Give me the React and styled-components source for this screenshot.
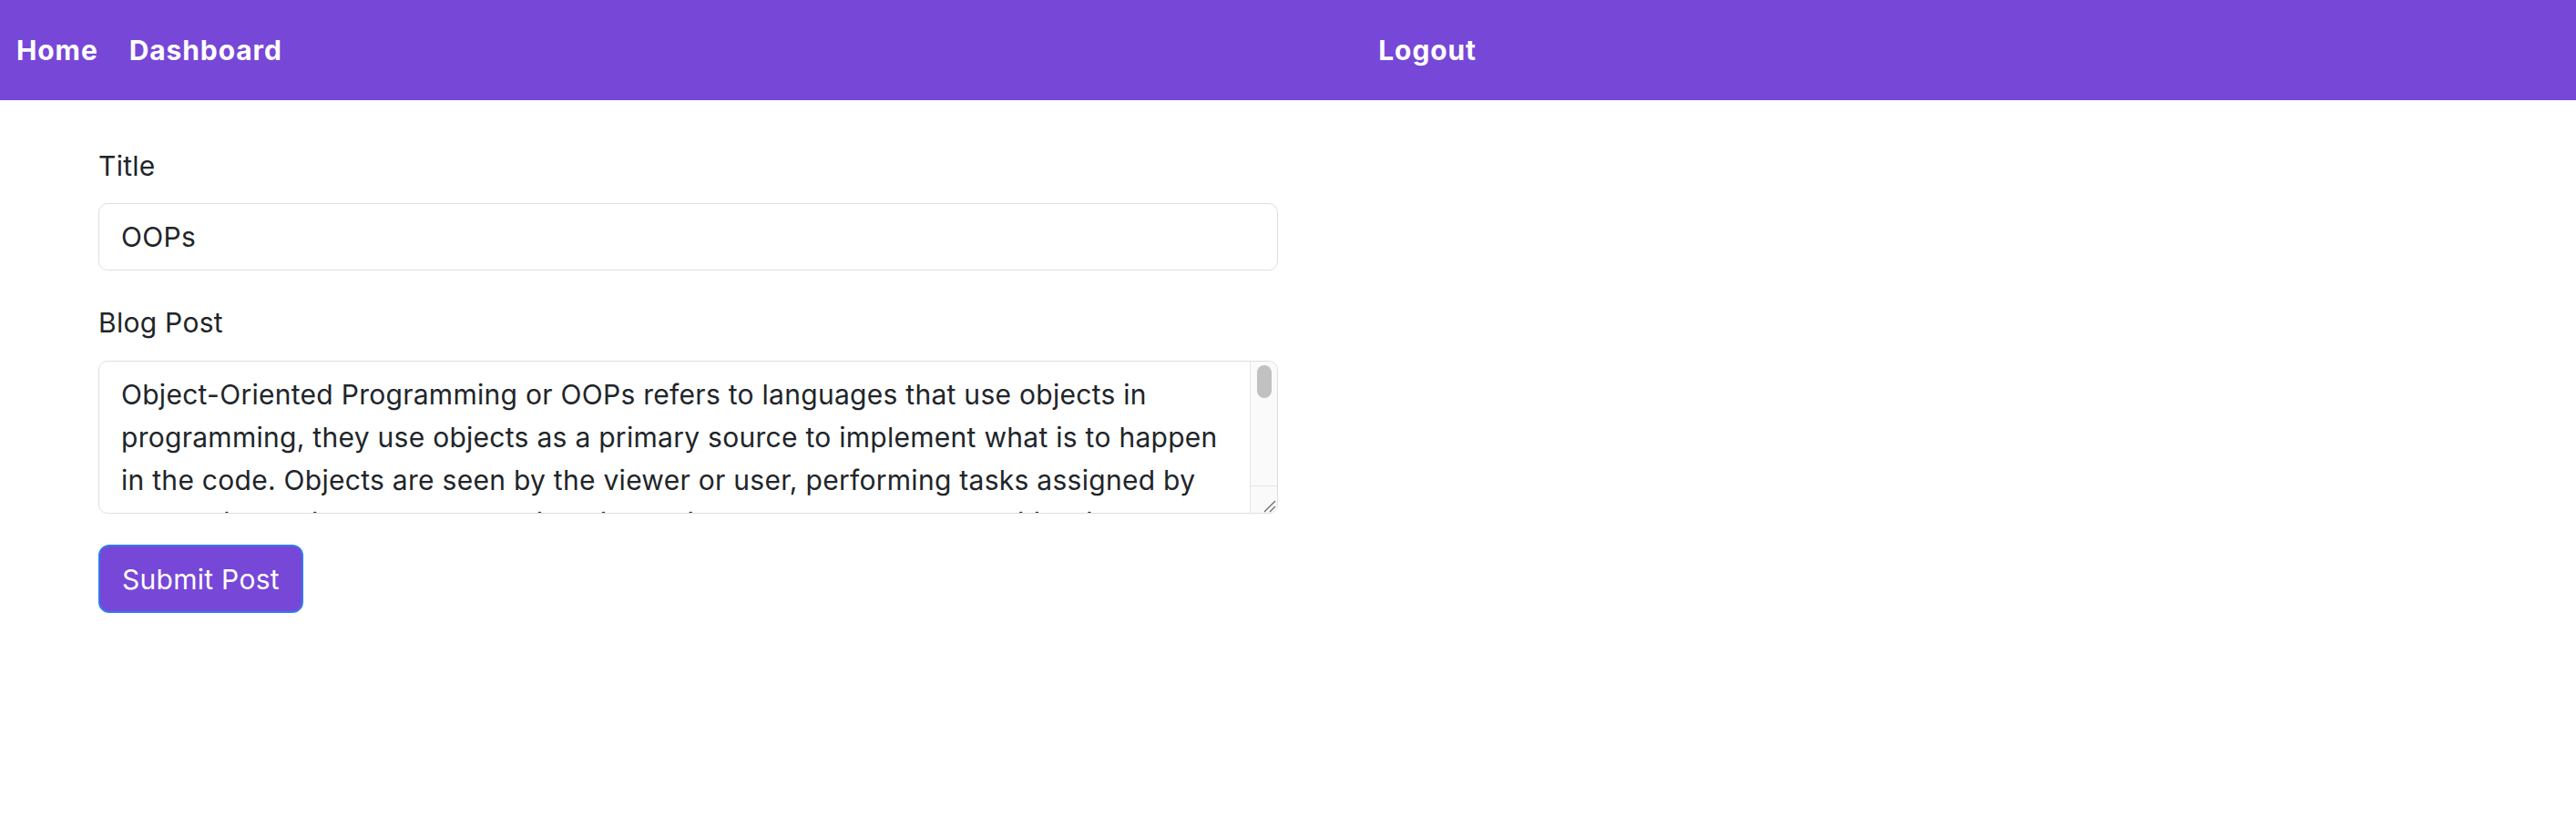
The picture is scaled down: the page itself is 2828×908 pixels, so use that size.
import React, { useState } from "react";
import styled, { createGlobalStyle } from "styled-components";

const GlobalStyle = createGlobalStyle`
  html, body {
    margin: 0;
    padding: 0;
    background: #fff;
  }

  body {
    font-family: Inter, "Noto Sans", "Liberation Sans", sans-serif;
    color: #212529;
  }

  * {
    box-sizing: border-box;
  }
`;

const Navbar = styled.nav`
  height: 110px;
  background-color: #7747d7;
  display: flex;
  align-items: center;
  padding: 0 18px;

  & .navbar__links {
    display: flex;
    align-items: center;
    gap: 34px;
    width: 1603px;
  }

  & .navbar__links--end {
    margin-left: auto;
  }
`;

const NavLink = styled.a`
  color: #fff;
  font-size: 30px;
  font-weight: 700;
  letter-spacing: 0.9px;
  text-decoration: none;
  cursor: pointer;
`;

const Main = styled.main`
  padding: 49px 108px;
`;

const Form = styled.form`
  width: 1295px;
  display: flex;
  flex-direction: column;
`;

const Field = styled.div`
  display: flex;
  flex-direction: column;
  margin-bottom: ${({ $gap }) => $gap || 34}px;
`;

const Label = styled.label`
  font-size: 30px;
  line-height: 46px;
  letter-spacing: 0.28px;
  margin-bottom: ${({ $gap }) => $gap || 18}px;
`;

const controlStyles = `
  width: 100%;
  font-family: Inter, "Noto Sans", "Liberation Sans", sans-serif;
  font-size: 30px;
  line-height: 46px;
  letter-spacing: 0.28px;
  color: #212529;
  background: #fff;
  border: 1px solid #dbdfe4;
  border-radius: 10px;
  outline: none;
`;

const Input = styled.input`
  ${controlStyles}
  height: 74px;
  padding: 13px 24px;
`;

const TextAreaWrap = styled.div`
  position: relative;
  height: 168px;
`;

const TextArea = styled.textarea`
  ${controlStyles}
  display: block;
  height: 100%;
  line-height: 47px;
  padding: 13px 53px 13px 24px;
  resize: none;
  overflow-y: hidden;
`;

const ScrollTrack = styled.div`
  position: absolute;
  top: 1px;
  right: 1px;
  bottom: 1px;
  width: 30px;
  background: #fafafa;
  border-left: 1px solid #e6e6e6;
  border-radius: 0 9px 9px 0;
  display: flex;
  flex-direction: column;
  align-items: center;
  pointer-events: none;

  & .scrollTrack__thumb {
    margin-top: 4px;
    width: 16px;
    height: 36px;
    border-radius: 8px;
    background: #c1c1c1;
  }

  & .scrollTrack__corner {
    margin-top: auto;
    align-self: stretch;
    height: 30px;
    border-top: 1px solid #e6e6e6;
    display: flex;
    align-items: flex-end;
    justify-content: flex-end;
  }
`;

const SubmitButton = styled.button`
  align-self: flex-start;
  height: 75px;
  padding: 0 24px;
  font-family: Inter, "Noto Sans", "Liberation Sans", sans-serif;
  font-size: 30px;
  letter-spacing: 0.28px;
  color: #fff;
  background-color: #7747d7;
  border: 2px solid #3478f0;
  border-radius: 12px;
  cursor: pointer;
`;

const initialPost =
  "Object-Oriented Programming or OOPs refers to languages that use objects in programming, they use objects as a primary source to implement what is to happen in the code. Objects are seen by the viewer or user, performing tasks assigned by you. Object-oriented programming aims to implement real-world entities like inheritance, hiding, polymorphism etc. in programming. The main aim of OOP is to bind together the data and the functions that operate on them so that no other part of the code can access this data except that function.";

const App = () => {
  const [title, setTitle] = useState("OOPs");
  const [post, setPost] = useState(initialPost);

  return (
    <>
      <GlobalStyle />
      <Navbar>
        <div className="navbar__links">
          <NavLink>Home</NavLink>
          <NavLink>Dashboard</NavLink>
          <NavLink className="navbar__links--end">Logout</NavLink>
        </div>
      </Navbar>
      <Main>
        <Form onSubmit={(e) => e.preventDefault()}>
          <Field>
            <Label htmlFor="title">Title</Label>
            <Input
              id="title"
              value={title}
              onChange={(e) => setTitle(e.target.value)}
            />
          </Field>
          <Field $gap={34}>
            <Label htmlFor="post" $gap={19}>
              Blog Post
            </Label>
            <TextAreaWrap>
              <TextArea
                id="post"
                value={post}
                onChange={(e) => setPost(e.target.value)}
              />
              <ScrollTrack>
                <div className="scrollTrack__thumb" />
                <div className="scrollTrack__corner">
                  <svg width="16" height="16" viewBox="0 0 16 16">
                    <path
                      d="M2 15 L14 3 M8 15 L14 9"
                      stroke="#6b6b6b"
                      strokeWidth="1.3"
                      fill="none"
                    />
                  </svg>
                </div>
              </ScrollTrack>
            </TextAreaWrap>
          </Field>
          <SubmitButton type="submit">Submit Post</SubmitButton>
        </Form>
      </Main>
    </>
  );
};

export default App;
